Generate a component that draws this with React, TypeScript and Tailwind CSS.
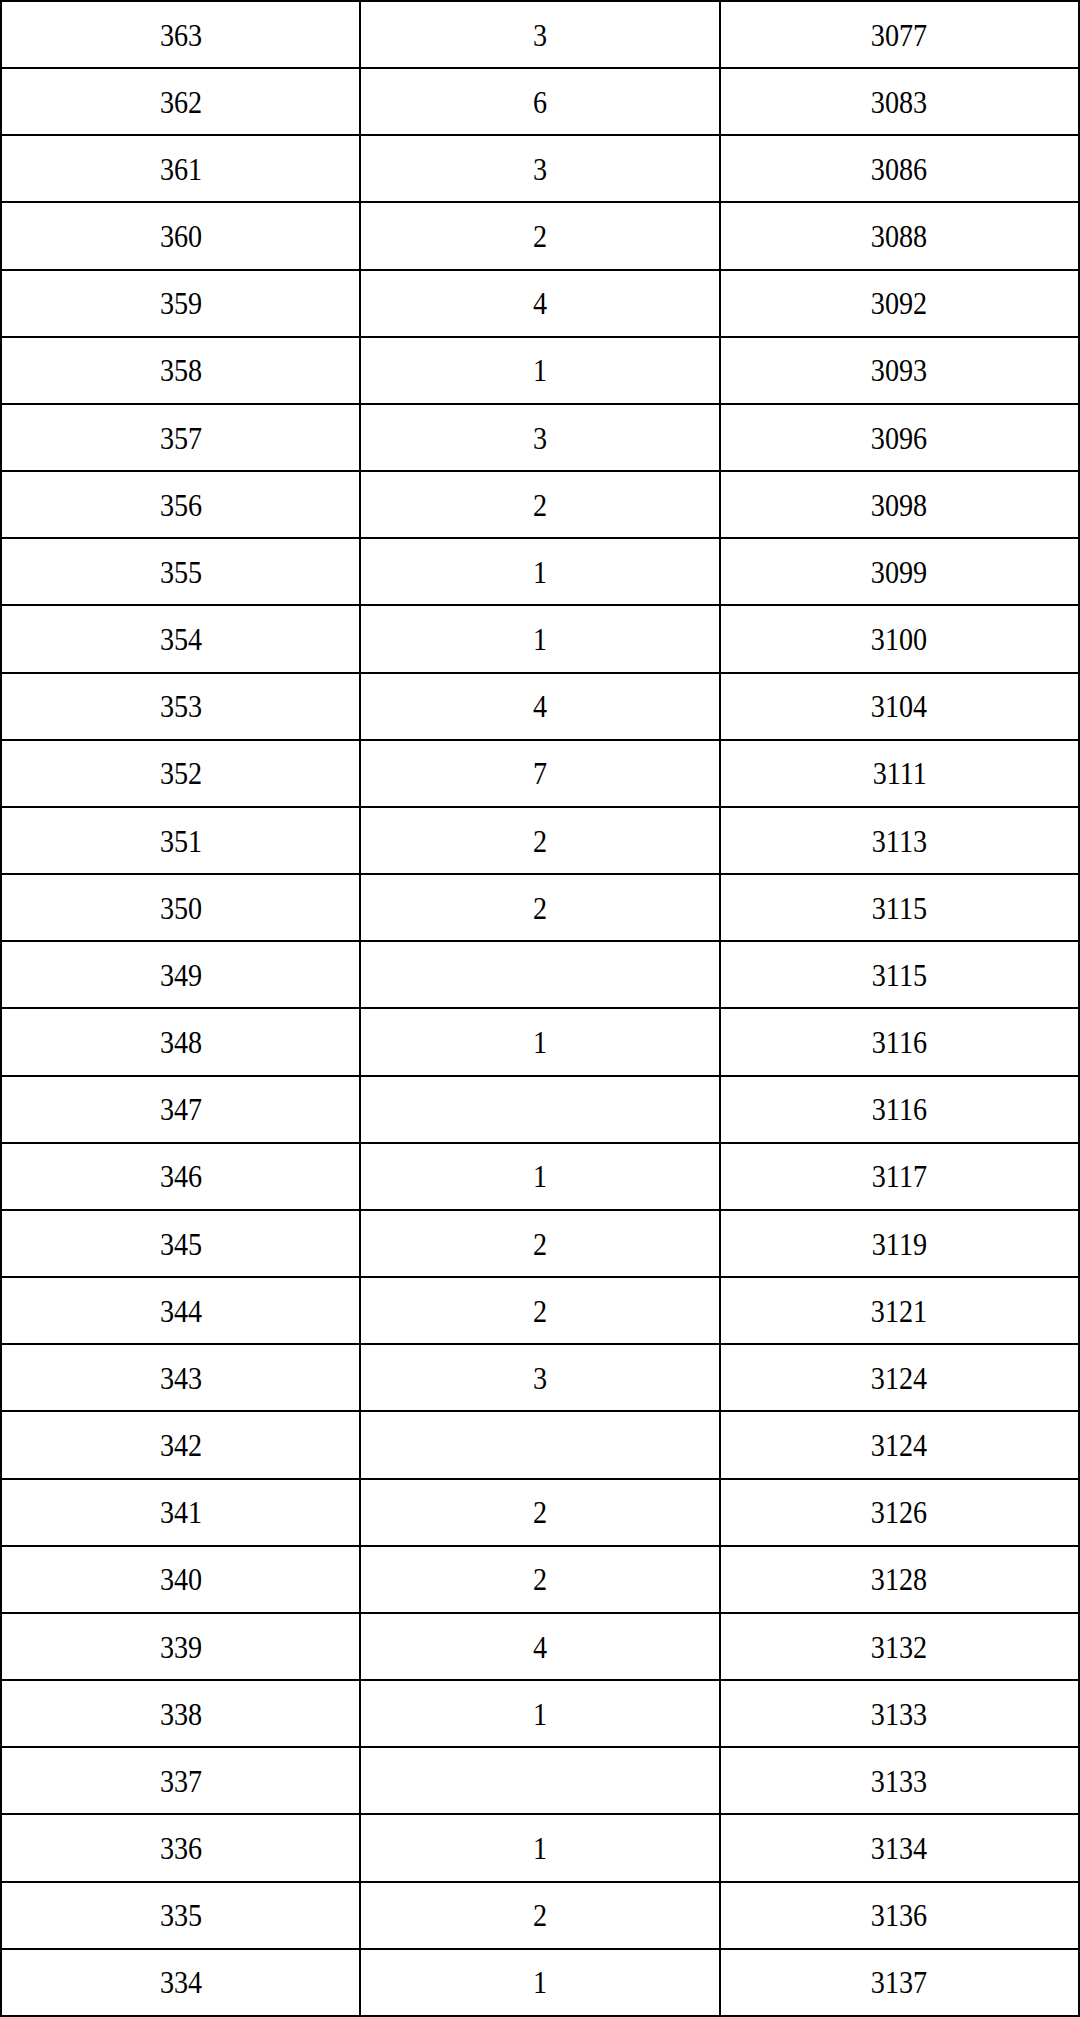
import React from 'react';

const rows: [number, string, number][] = [
  [363, '3', 3077],
  [362, '6', 3083],
  [361, '3', 3086],
  [360, '2', 3088],
  [359, '4', 3092],
  [358, '1', 3093],
  [357, '3', 3096],
  [356, '2', 3098],
  [355, '1', 3099],
  [354, '1', 3100],
  [353, '4', 3104],
  [352, '7', 3111],
  [351, '2', 3113],
  [350, '2', 3115],
  [349, '', 3115],
  [348, '1', 3116],
  [347, '', 3116],
  [346, '1', 3117],
  [345, '2', 3119],
  [344, '2', 3121],
  [343, '3', 3124],
  [342, '', 3124],
  [341, '2', 3126],
  [340, '2', 3128],
  [339, '4', 3132],
  [338, '1', 3133],
  [337, '', 3133],
  [336, '1', 3134],
  [335, '2', 3136],
  [334, '1', 3137],
];

function Cell({ value }: { value: string | number }) {
  return (
    <div className="bg-white flex items-center justify-center">
      <span className="inline-block scale-x-[0.88] text-[32px] leading-none text-black">{value}</span>
    </div>
  );
}

export default function App() {
  return (
    <div
      className="w-[1080px] h-[2017px] bg-black p-[2px] grid grid-cols-3 grid-rows-[repeat(30,minmax(0,1fr))] gap-[2px]"
      style={{ fontFamily: '"Liberation Serif", "Noto Sans CJK SC", serif' }}
    >
      {rows.map(([score, count, total]) => (
        <React.Fragment key={score}>
          <Cell value={score} />
          <Cell value={count} />
          <Cell value={total} />
        </React.Fragment>
      ))}
    </div>
  );
}
